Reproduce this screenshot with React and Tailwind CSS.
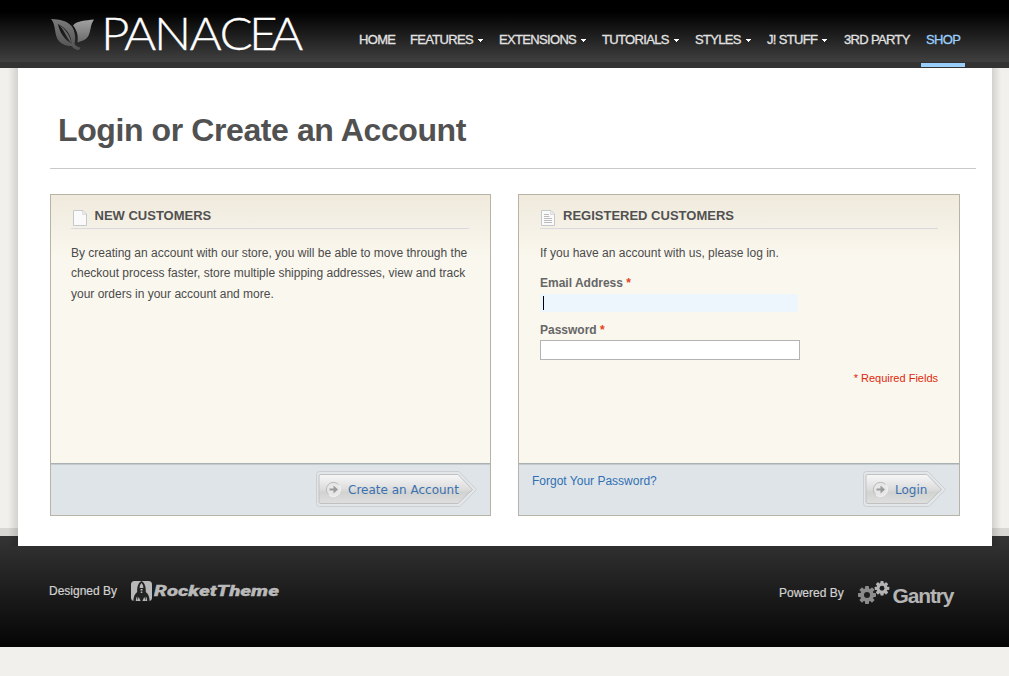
const NAV = [
  { label: 'HOME', width: 'w-[51px]' },
  { label: 'FEATURES', width: 'w-[89px]', menu: true },
  { label: 'EXTENSIONS', width: 'w-[103px]', menu: true },
  { label: 'TUTORIALS', width: 'w-[93px]', menu: true },
  { label: 'STYLES', width: 'w-[72px]', menu: true },
  { label: 'J! STUFF', width: 'w-[77px]', menu: true },
  { label: '3RD PARTY', width: 'w-[77px]' },
];

function LeafLogo() {
  return (
    <svg width="262" height="68" viewBox="50 0 262 68" role="img" aria-label="Panacea" className="overflow-visible">
      <defs>
        <linearGradient id="leafA" x1="0" y1="0" x2="0" y2="1">
          <stop offset="0" stopColor="#7a7a7a" />
          <stop offset="1" stopColor="#525252" />
        </linearGradient>
        <linearGradient id="leafB" x1="0" y1="0" x2="0" y2="1">
          <stop offset="0" stopColor="#a2a2a2" />
          <stop offset="1" stopColor="#6a6a6a" />
        </linearGradient>
      </defs>
      <path
        fill="url(#leafA)"
        fillRule="evenodd"
        d="M51 19C60 19.500 67 20.500 71.500 26C75 30.500 76 37.500 74.500 44C76 46.200 78 47.300 80.500 47.500L79 50C76 50 73.500 48.500 71.500 46C65 46 59.500 43.500 57 38C54.500 32 55.500 24 51 19ZM58 24C59.500 32 64 39.500 71.500 43.500C71.500 35 66 28 58 24Z"
      />
      <path d="M58.500 24.500C64.500 30 66 37 71.500 43.500C70 35.500 65.500 28.500 58.500 24.500Z" fill="#666" />
      <path fill="url(#leafB)" d="M73 25.500C77 20.500 86 20.500 94 19.500C90 25 91 32 88 36.500C85.500 40.500 81 41 77.500 42.500C78.500 36 77 30 73 25.500Z" />
      <text
        transform="scale(1.07 1)"
        x="94.400 115.900 143.900 177.100 205.100 232.700 253.300"
        y="50"
        fill="#fff"
        stroke="#fff"
        strokeWidth="0.300"
        fontSize="46"
        fontWeight="300"
        fontFamily="Lato, sans-serif"
      >
        PANACEA
      </text>
    </svg>
  );
}

function PageIcon({ lines }) {
  return (
    <svg width="14" height="16" viewBox="0 0 14 16" className="shrink-0">
      <path d="M0.500 0.500H10L13.500 4V15.500H0.500Z" fill="#fafafa" stroke="#c6c9cc" strokeLinejoin="round" />
      <path d="M9.500 1V4.500H13" fill="#e9e9e9" stroke="#dedede" />
      {lines && <path d="M3 4.500H8M3 6.500H8.500M3 8.500H11M3 10.500H11M3 12.500H11" stroke="#bcbcbc" />}
    </svg>
  );
}

function ArrowButton({ label, width }) {
  const w = width;
  return (
    <button className="grid h-9 text-left">
      <svg width={w} height="36" viewBox={`0 0 ${w} 36`} className="col-start-1 row-start-1">
        <defs>
          <linearGradient id={`face${w}`} x1="0" y1="0" x2="0" y2="1">
            <stop offset="0" stopColor="#f7f7f7" />
            <stop offset="0.5" stopColor="#dcdddc" />
            <stop offset="0.62" stopColor="#d1d3d1" />
            <stop offset="1" stopColor="#dedfde" />
          </linearGradient>
        </defs>
        <path
          d={`M3.500 0.500H${w - 18}L${w - 0.5} 18.500L${w - 17} 35.500H3.500Q0.500 35.500 0.500 32.500V3.500Q0.500 0.500 3.500 0.500Z`}
          fill="#e2e6e9"
          stroke="#cbcfd1"
        />
        <path
          d={`M5 3.500H${w - 19}L${w - 4.5} 18.500L${w - 19} 32.500H5Q3 32.500 3 31V5Q3 3.500 5 3.500Z`}
          fill={`url(#face${w})`}
          stroke="#c0c2c2"
        />
        <circle cx="17.500" cy="18.500" r="7" fill="#e6e7e6" stroke="#f4f4f4" />
        <path d="M12.500 23.500A7 7 0 0 1 22.500 13.500" fill="none" stroke="#b2b4b3" />
        <path d="M13.500 17.500H17.500V14.500L22 18.500L17.500 22.500V19.500H13.500Z" fill="#999b9a" />
      </svg>
      <span className="col-start-1 row-start-1 pt-[10px] pl-8 font-['DejaVu_Sans'] text-[12px] leading-[18px] whitespace-nowrap text-[#3b70b0]">
        {label}
      </span>
    </button>
  );
}

function Panel({ title, lines, width, padding, heading, icon, children, footer }) {
  return (
    <section className={`flex h-[322px] flex-col border border-[#b8b4a5] ${width}`}>
      <div className={`flex h-[268px] flex-col bg-[#faf7ee] bg-[linear-gradient(#f0eadd,#faf7ee_62px)] ${padding}`}>
        <h2 className={`mt-[13px] flex h-[21px] border-b border-[#d9dadd] text-[13px] leading-[16px] font-bold text-[#515151] ${heading}`}>
          <span className={`mt-0.5 h-4 shrink-0 ${icon}`}>
            <PageIcon lines={lines} />
          </span>
          <span className="whitespace-nowrap">{title}</span>
        </h2>
        {children}
      </div>
      <div className="h-0.5 border-t border-[#a9b1b3] bg-[#c3cbcf]" />
      <div className="flex flex-1 bg-[#dfe4e8]">{footer}</div>
    </section>
  );
}

function RocketMark() {
  return (
    <svg width="150" height="24" viewBox="130 578 150 24" role="img" aria-label="RocketTheme">
      <rect x="131" y="581" width="21" height="20" rx="3.500" fill="#b9b9b9" />
      <path d="M141.500 581C138 583 137 587 137.200 592C134.500 594 133.500 597 133.300 601.500H135.800C135.900 599 136.300 597.500 137.200 596.500L137.500 601.500H145.500L145.800 596.500C146.700 597.500 147.100 599 147.200 601.500H149.700C149.500 597 148.500 594 145.800 592C146 587 145 583 141.500 581Z" fill="#242424" />
      <path d="M141.500 583C142.900 584.500 143.400 586 143.300 588H139.700C139.600 586 140.100 584.500 141.500 583ZM140.500 589H142.500V590.500H140.500ZM140.700 591.500H142.300V593H140.700Z" fill="#b9b9b9" />
      <path d="M138.800 597L140.500 601H137ZM144.200 597L146 601H142.500Z" fill="#b9b9b9" />
      <text
        x="154"
        y="596"
        fill="#b9b9b9"
        stroke="#b9b9b9"
        strokeWidth="0.300"
        fontSize="15"
        fontWeight="900"
        fontStyle="italic"
        fontFamily="Roboto, sans-serif"
        textLength="125"
        lengthAdjust="spacingAndGlyphs"
      >
        RocketTheme
      </text>
    </svg>
  );
}

function Gear({ x, y, r, fill }) {
  return (
    <g transform={`translate(${x} ${y}) scale(${r / 9})`} fill={fill}>
      {[0, 45, 90, 135].map((a) => (
        <rect key={a} x="-2" y="-9" width="4" height="18" rx="0.800" transform={`rotate(${a})`} />
      ))}
      <circle r="6.800" />
      <circle r="3" fill="#1f1f1f" />
    </g>
  );
}

function GantryMark() {
  return (
    <svg width="100" height="32" viewBox="857 578 100 32" role="img" aria-label="Gantry">
      <Gear x={867} y={595} r={9} fill="#8b8b8b" />
      <Gear x={882} y={588.3} r={7.3} fill="#b5b5b5" />
      <text x="892.500" y="603" fill="#b5b5b5" fontSize="21" fontWeight="700" fontFamily="Liberation Sans, Arial, sans-serif" textLength="62" lengthAdjust="spacing">
        Gantry
      </text>
    </svg>
  );
}

export default function App() {
  return (
    <div className="h-[676px] w-[1009px] overflow-hidden bg-[#f1f0ec] font-['Liberation_Sans',Arial,sans-serif] text-xs text-[#4b4b4b]">
      <header className="flex h-[68px] border-b-[6px] border-[#333] bg-[linear-gradient(#000_0px,#000_12px,#404040_62px)] bg-no-repeat pl-[50px]">
        <a className="h-[62px] w-[309px] shrink-0">
          <LeafLogo />
        </a>
        <nav className="flex h-[68px] text-[13px] leading-4 tracking-[-0.67px] text-[#e2e2e2] [-webkit-text-stroke:0.3px]">
          {NAV.map((item) => (
            <a key={item.label} className={`mt-8 flex shrink-0 whitespace-nowrap ${item.width}`}>
              {item.label}
              {item.menu && (
                <svg width="5" height="3" viewBox="0 0 5 3" className="mt-[7px] ml-[5px]">
                  <path d="M0 0H5V1H4V2H3V3H2V2H1V1H0Z" fill="#fff" />
                </svg>
              )}
            </a>
          ))}
          <a className="flex h-[67px] w-11 border-b-4 border-[#9bcffb] pt-8 pl-[5px] text-[#9bcffb]">SHOP</a>
        </nav>
      </header>

      <div className="h-[468px] border-b-8 border-[#d8d7d3]">
        <div className="relative z-10 flex h-[478px]">
          <div className="w-[18px] bg-[linear-gradient(90deg,transparent_8px,rgba(0,0,0,0.13))]" />
          <main className="w-[974px] bg-white pl-8">
            <h1 className="flex h-[101px] w-[926px] border-b border-[#c9c9c9] pt-[42px] pl-2 text-[32px] leading-10 font-bold tracking-[-0.4px] text-[#515151]">
              Login or Create an Account
            </h1>
            <div className="mt-[25px] flex gap-[27px]">
              <Panel
                title="NEW CUSTOMERS"
                width="w-[441px]"
                padding="pl-5 pr-[21px]"
                heading="pl-0.5"
                icon="w-[21.5px]"
                footer={
                  <div className="ml-[265px] pt-1.5">
                    <ArrowButton label="Create an Account" width={161} />
                  </div>
                }
              >
                <p className="mt-[14px] leading-[20.3px] whitespace-nowrap">
                  By creating an account with our store, you will be able to move through the
                  <br />
                  checkout process faster, store multiple shipping addresses, view and track
                  <br />
                  your orders in your account and more.
                </p>
              </Panel>
              <Panel
                title="REGISTERED CUSTOMERS"
                lines
                width="w-[442px]"
                padding="px-[21px]"
                heading="pl-px"
                icon="w-[22px]"
                footer={
                  <>
                    <a className="w-[344px] pt-2 pl-[13px] leading-4 text-[#3070b3]">Forgot Your Password?</a>
                    <div className="pt-1.5">
                      <ArrowButton label="Login" width={83} />
                    </div>
                  </>
                }
              >
                <p className="mt-4 leading-4">If you have an account with us, please log in.</p>
                <label className="mt-[14px] leading-4 font-bold text-[#666]">
                  Email Address <span className="text-[#e8401c]">*</span>
                </label>
                <div className="mt-[3px] flex h-[18px] w-[258px] bg-[#edf6fd] pt-0.5 pl-[3px]">
                  <span className="h-[14px] w-px bg-black" />
                </div>
                <label className="mt-[10px] leading-4 font-bold text-[#666]">
                  Password <span className="text-[#e8401c]">*</span>
                </label>
                <div className="mt-[2px] h-5 w-[260px] border border-[#b3b3b3] bg-white" />
                <p className="mt-[10px] text-right text-[11px] leading-4 text-[#df280a]">* Required Fields</p>
              </Panel>
            </div>
          </main>
          <div className="w-[17px] bg-[linear-gradient(270deg,transparent_8px,rgba(0,0,0,0.13))]" />
        </div>
      </div>

      <footer className="flex h-[111px] bg-[linear-gradient(#343434,#050505)] pl-[49px] text-[#d2d2d2] [-webkit-text-stroke:0.2px]">
        <span className="mt-[47px] w-[81px] leading-4">Designed By</span>
        <div className="mt-[42px] w-[649px]">
          <RocketMark />
        </div>
        <span className="mt-[49px] w-[78px] leading-4">Powered By</span>
        <div className="mt-[42px]">
          <GantryMark />
        </div>
      </footer>
    </div>
  );
}
